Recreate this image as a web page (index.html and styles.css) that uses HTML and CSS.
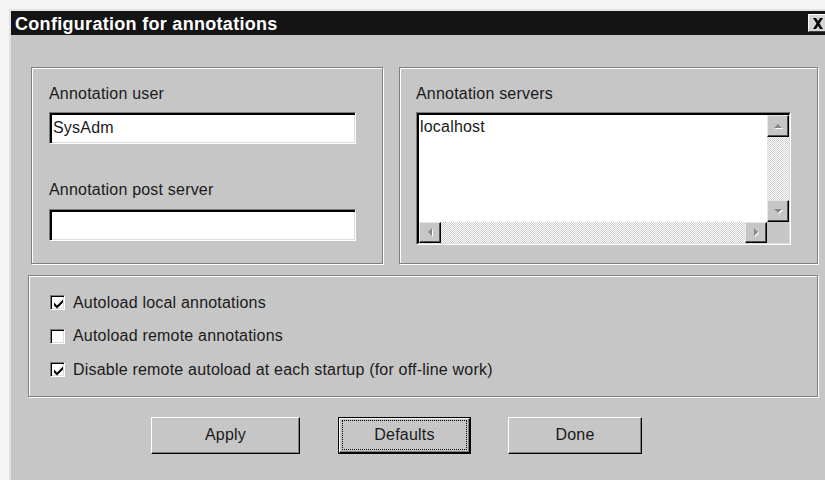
FILE: index.html
```html
<!DOCTYPE html>
<html lang="en">
<head>
<meta charset="utf-8">
<title>Configuration for annotations</title>
<link rel="stylesheet" href="styles.css">
</head>
<body>
<div class="window">
  <div class="titlebar">
    <span class="title">Configuration for annotations</span>
    <div class="close" role="button" aria-label="Close">
      <svg width="12" height="11" viewBox="0 0 12 11"><path d="M1 0h3l2 3 2-3h3L7.5 5.5 11 11H8L6 8 4 11H1l3.5-5.5z" fill="#000"/></svg>
    </div>
  </div>

  <div class="client">
    <div class="top-row">
      <div class="group group-user">
        <div class="label">Annotation user</div>
        <div class="field">SysAdm</div>
        <div class="label label-post">Annotation post server</div>
        <div class="field field-post"></div>
      </div>

      <div class="group group-servers">
        <div class="label">Annotation servers</div>
        <div class="listbox">
          <div class="listbox-inner">
            <div class="list-content">localhost</div>
            <div class="vscroll">
              <div class="sb-btn">
                <svg width="11" height="7" viewBox="0 0 11 7"><path d="M2 6h8L6 2z" fill="#fff"/><path d="M1 5h8L5 1z" fill="#868686"/></svg>
              </div>
              <div class="sb-track"></div>
              <div class="sb-btn">
                <svg width="11" height="7" viewBox="0 0 11 7"><path d="M2 2h8L6 6z" fill="#fff"/><path d="M1 1h8L5 5z" fill="#868686"/></svg>
              </div>
            </div>
            <div class="hscroll">
              <div class="sb-btn">
                <svg width="7" height="11" viewBox="0 0 7 11"><path d="M6 2v8L2 6z" fill="#fff"/><path d="M5 1v8L1 5z" fill="#868686"/></svg>
              </div>
              <div class="sb-track"></div>
              <div class="sb-btn">
                <svg width="7" height="11" viewBox="0 0 7 11"><path d="M2 2v8l4-4z" fill="#fff"/><path d="M1 1v8l4-4z" fill="#868686"/></svg>
              </div>
            </div>
            <div class="corner"></div>
          </div>
        </div>
      </div>
    </div>

    <div class="group group-options">
      <div class="check-row">
        <span class="checkbox"><svg width="11" height="11" viewBox="0 0 11 11"><path d="M1 4.5l3 3 6-6v3l-6 6-3-3z" fill="#000"/></svg></span>
        <span>Autoload local annotations</span>
      </div>
      <div class="check-row">
        <span class="checkbox"></span>
        <span>Autoload remote annotations</span>
      </div>
      <div class="check-row">
        <span class="checkbox"><svg width="11" height="11" viewBox="0 0 11 11"><path d="M1 4.5l3 3 6-6v3l-6 6-3-3z" fill="#000"/></svg></span>
        <span>Disable remote autoload at each startup (for off-line work)</span>
      </div>
    </div>

    <div class="buttons">
      <div class="btn btn-apply">Apply</div>
      <div class="btn-default">
        <div class="btn btn-face"><span class="focus">Defaults</span></div>
      </div>
      <div class="btn btn-done">Done</div>
    </div>
  </div>
</div>
</body>
</html>
```

FILE: styles.css
```css
html, body {
  margin: 0;
  height: 100%;
}

body {
  background: #f5f5f5;
  overflow: hidden;
  font-family: "Liberation Sans", Arial, sans-serif;
  font-size: 16px;
  letter-spacing: 0.2px;
  color: #1a1a1a;
}

/* dialog window */
.window {
  margin: 9px 0 0 9px;
  width: 818px;
  height: 480px;
  border-top: 2px solid #e2e2e2;
  border-left: 2px solid #e2e2e2;
  background: #c6c6c6;
}

.titlebar {
  height: 24px;
  box-sizing: border-box;
  padding: 2px 1px 0 4px;
  background: #141414;
  color: #fff;
  display: flex;
  align-items: flex-start;
}

.title {
  font-weight: bold;
  font-size: 18px;
  line-height: 22px;
  letter-spacing: 0.3px;
}

.close {
  margin-left: auto;
  margin-top: 1px;
  width: 20px;
  height: 18px;
  box-sizing: border-box;
  background: #d4d4d4;
  border-top: 1px solid #fff;
  border-left: 1px solid #fff;
  border-right: 1px solid #404040;
  border-bottom: 1px solid #404040;
  display: flex;
  align-items: center;
  justify-content: center;
}

.client {
  padding-top: 32px;
}

/* etched group frames */
.group {
  box-sizing: border-box;
  border: 1px solid #808080;
  box-shadow: 1px 1px 0 #fff, inset 1px 1px 0 #fff;
}

.top-row {
  display: flex;
  gap: 16px;
  margin-left: 20px;
  height: 197px;
}

.group-user {
  width: 352px;
  padding: 17px 0 0 17px;
}

.group-servers {
  width: 419px;
  padding: 17px 0 0 16px;
}

.label {
  line-height: 18px;
}

.label-post {
  margin-top: 37px;
}

/* sunken text entry */
.field {
  margin-top: 9px;
  width: 307px;
  height: 32px;
  box-sizing: border-box;
  background: #fff;
  border-top: 1px solid #7a7a7a;
  border-left: 1px solid #7a7a7a;
  border-right: 1px solid #fff;
  border-bottom: 1px solid #fff;
  box-shadow: inset 2px 2px 0 #000, inset -1px -1px 0 #dcdcdc;
  padding-left: 3px;
  line-height: 30px;
}

.field-post {
  margin-top: 10px;
}

/* list with scrollbars */
.listbox {
  margin-top: 9px;
  width: 375px;
  height: 133px;
  box-sizing: border-box;
  border-top: 1px solid #7a7a7a;
  border-left: 1px solid #7a7a7a;
  border-right: 1px solid #fff;
  border-bottom: 1px solid #fff;
}

.listbox-inner {
  height: 100%;
  box-sizing: border-box;
  border-top: 2px solid #000;
  border-left: 2px solid #000;
  border-right: 1px solid #dcdcdc;
  border-bottom: 1px solid #dcdcdc;
  display: grid;
  grid-template-columns: 1fr 22px;
  grid-template-rows: 1fr 21px;
  background: #c6c6c6;
}

.list-content {
  background: #fff;
  padding: 3px 0 0 1px;
  line-height: 18px;
}

.vscroll {
  display: flex;
  flex-direction: column;
}

.hscroll {
  display: flex;
}

.sb-track {
  flex: 1;
  background: repeating-conic-gradient(#fff 0 25%, #cfcfcf 0 50%) 0 0 / 2px 2px;
}

.sb-btn {
  width: 22px;
  height: 22px;
  box-sizing: border-box;
  background: #c6c6c6;
  border-top: 1px solid #e6e6e6;
  border-left: 1px solid #e6e6e6;
  border-right: 1px solid #000;
  border-bottom: 1px solid #000;
  box-shadow: inset -1px -1px 0 #505050;
  display: flex;
  align-items: center;
  justify-content: center;
}

.hscroll .sb-btn {
  height: 21px;
}

/* options */
.group-options {
  margin: 11px 0 0 17px;
  width: 790px;
  height: 122px;
  padding: 17.5px 0 0 21px;
  display: flex;
  flex-direction: column;
  gap: 15.5px;
}

.check-row {
  display: flex;
  align-items: center;
  gap: 8px;
  height: 18px;
  line-height: 18px;
}

.checkbox {
  width: 15px;
  height: 15px;
  box-sizing: border-box;
  background: #fff;
  border-top: 1px solid #7a7a7a;
  border-left: 1px solid #7a7a7a;
  border-right: 1px solid #fff;
  border-bottom: 1px solid #fff;
  box-shadow: inset 1px 1px 0 #000, inset -1px -1px 0 #dcdcdc;
  display: flex;
  align-items: center;
  justify-content: center;
  padding: 1px 0 0 1px;
}

/* push buttons */
.buttons {
  display: flex;
  margin: 20px 0 0 140px;
}

.btn {
  height: 37px;
  box-sizing: border-box;
  background: #c6c6c6;
  border-top: 1px solid #fff;
  border-left: 1px solid #fff;
  border-right: 1px solid #000;
  border-bottom: 1px solid #000;
  box-shadow: inset -1px -1px 0 #808080;
  display: flex;
  align-items: center;
  justify-content: center;
  padding-bottom: 2px;
}

.btn-apply {
  width: 149px;
}

.btn-default {
  width: 133px;
  height: 37px;
  box-sizing: border-box;
  margin-left: 38px;
  border: 1px solid #000;
}

.btn-face {
  height: 35px;
  padding: 1px 2px 2px 2px;
  align-items: stretch;
}

.focus {
  flex: 1;
  border: 1px dotted #000;
  display: flex;
  align-items: center;
  justify-content: center;
  padding-bottom: 1px;
}

.btn-done {
  width: 134px;
  margin-left: 37px;
}
```
